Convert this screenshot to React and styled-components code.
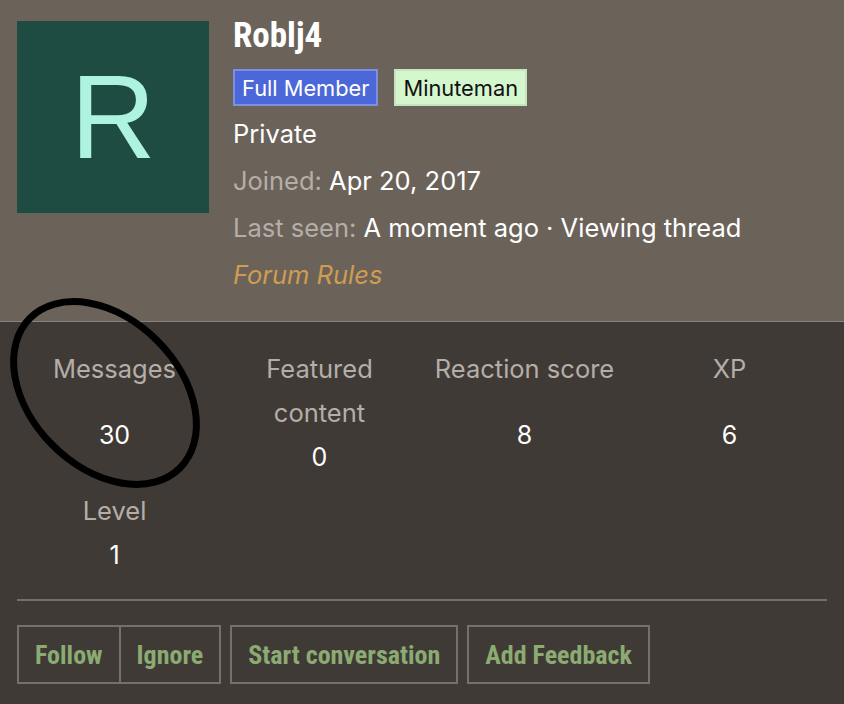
import React from "react";
import styled, { createGlobalStyle } from "styled-components";

const Global = createGlobalStyle`
  html, body { margin: 0; padding: 0; }
  body {
    background: #3f3a36;
    font-family: Inter, "Noto Sans", "Liberation Sans", sans-serif;
    color: #fff;
  }
`;

const Card = styled.div`
  position: relative;
  width: 844px;
  height: 704px;
  overflow: hidden;
  background: #3f3a36;
`;

const Header = styled.header`
  display: flex;
  gap: 24px;
  padding: 21px 17px 23px;
  background: #6b635a;
  border-bottom: 1px solid #8a8179;
`;

const Avatar = styled.div`
  flex: none;
  width: 192px;
  height: 192px;
  background: #1f4c42;
  color: #aef2e0;
  display: flex;
  align-items: center;
  justify-content: center;
  font-family: "Liberation Sans", Arial, sans-serif;
  font-size: 118px;
  line-height: 1;
`;

const Info = styled.div`
  display: flex;
  flex-direction: column;
`;

const Name = styled.h1`
  margin: 0 0 18px;
  font-family: "Roboto Condensed", Roboto, sans-serif;
  font-stretch: condensed;
  font-weight: 700;
  font-size: 35px;
  line-height: 30px;
  color: #fff;
`;

const Badges = styled.div`
  display: flex;
  gap: 16px;
  margin-bottom: 4px;
`;

const Badge = styled.span`
  display: inline-flex;
  align-items: center;
  height: 37px;
  box-sizing: border-box;
  padding: 0 7px;
  font-size: 21.8px;
  border: 2px solid ${(p) => p.$border};
  background: ${(p) => p.$bg};
  color: ${(p) => p.$color};
`;

const Line = styled.div`
  font-size: 25.5px;
  line-height: 47px;
  color: #fff;
  white-space: nowrap;
`;

const Muted = styled.span`
  color: #b5aea8;
`;

const RulesLink = styled.a`
  font-size: 25.5px;
  line-height: 47px;
  font-style: italic;
  color: #cf9c52;
  text-decoration: none;
`;

const Body = styled.section`
  padding: 25px 0 0;
`;

const StatsGrid = styled.div`
  display: grid;
  grid-template-columns: repeat(4, 1fr);
  row-gap: 10px;
  padding: 0 12px;
`;

const Stat = styled.dl`
  margin: 0;
  display: flex;
  flex-direction: column;
  text-align: center;
`;

const StatLabel = styled.dt`
  font-size: 25.5px;
  line-height: 44px;
  color: #b5aea8;
`;

const StatValue = styled.dd`
  margin: 0;
  flex: 1;
  display: flex;
  align-items: center;
  justify-content: center;
  min-height: 44px;
  font-size: 25px;
  color: #fff;
`;

const Divider = styled.hr`
  margin: 22px 17px 0;
  border: 0;
  border-top: 2px solid #766d68;
`;

const Actions = styled.div`
  display: flex;
  gap: 9px;
  padding: 24px 17px 0;
`;

const Group = styled.div`
  display: flex;
  border: 2px solid #776f6a;
`;

const Button = styled.button`
  height: 55px;
  padding: 0 16px;
  background: transparent;
  border: 0;
  border-left: ${(p) => (p.$split ? "2px solid #776f6a" : "0")};
  font-family: "Roboto Condensed", Roboto, sans-serif;
  font-stretch: condensed;
  font-weight: 700;
  font-size: 26px;
  color: #8bab72;
  cursor: pointer;
`;

const Annotation = styled.svg`
  position: absolute;
  left: 0;
  top: 0;
  pointer-events: none;
`;

const stats = [
  { label: "Messages", value: "30" },
  { label: "Featured content", value: "0", wrap: true },
  { label: "Reaction score", value: "8" },
  { label: "XP", value: "6" },
  { label: "Level", value: "1" },
];

export default function App() {
  return (
    <Card>
      <Global />
      <Header>
        <Avatar>R</Avatar>
        <Info>
          <Name>Roblj4</Name>
          <Badges>
            <Badge $bg="#4b67d8" $border="#7e8fe2" $color="#fff">Full Member</Badge>
            <Badge $bg="#d4f7cd" $border="#c6e4bf" $color="#111">Minuteman</Badge>
          </Badges>
          <Line>Private</Line>
          <Line>
            <Muted>Joined:</Muted> Apr 20, 2017
          </Line>
          <Line>
            <Muted>Last seen:</Muted> A moment ago · Viewing thread
          </Line>
          <div>
            <RulesLink href="#">Forum Rules</RulesLink>
          </div>
        </Info>
      </Header>
      <Body>
        <StatsGrid>
          {stats.map((s) => (
            <Stat key={s.label}>
              <StatLabel>
                {s.wrap ? (
                  <>
                    Featured
                    <br />
                    content
                  </>
                ) : (
                  s.label
                )}
              </StatLabel>
              <StatValue>{s.value}</StatValue>
            </Stat>
          ))}
        </StatsGrid>
        <Divider />
        <Actions>
          <Group>
            <Button>Follow</Button>
            <Button $split>Ignore</Button>
          </Group>
          <Group>
            <Button>Start conversation</Button>
          </Group>
          <Group>
            <Button>Add Feedback</Button>
          </Group>
        </Actions>
      </Body>
      <Annotation width="844" height="704" viewBox="0 0 844 704">
        <ellipse
          cx="105"
          cy="393"
          rx="106"
          ry="74"
          transform="rotate(45 105 393)"
          fill="none"
          stroke="#000"
          strokeWidth="7"
        />
      </Annotation>
    </Card>
  );
}
